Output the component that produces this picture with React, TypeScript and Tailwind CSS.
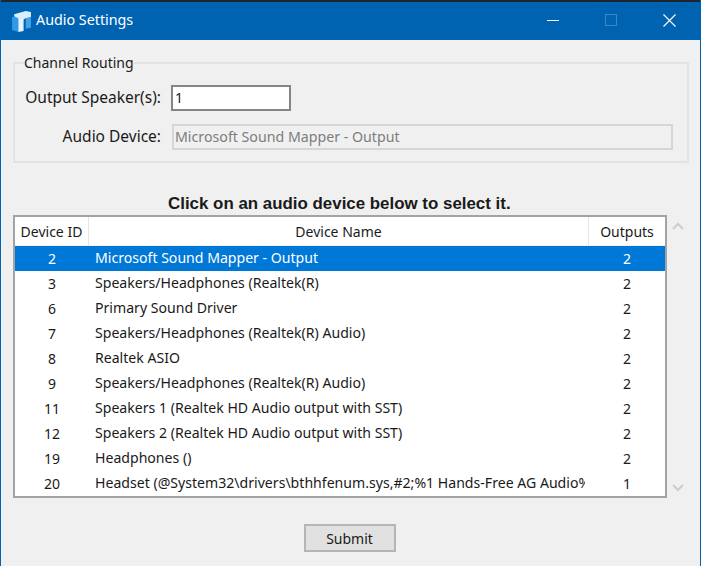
const rows = [
  { id: "2", name: "Microsoft Sound Mapper - Output", outputs: "2" },
  { id: "3", name: "Speakers/Headphones (Realtek(R)", outputs: "2" },
  { id: "6", name: "Primary Sound Driver", outputs: "2" },
  { id: "7", name: "Speakers/Headphones (Realtek(R) Audio)", outputs: "2" },
  { id: "8", name: "Realtek ASIO", outputs: "2" },
  { id: "9", name: "Speakers/Headphones (Realtek(R) Audio)", outputs: "2" },
  { id: "11", name: "Speakers 1 (Realtek HD Audio output with SST)", outputs: "2" },
  { id: "12", name: "Speakers 2 (Realtek HD Audio output with SST)", outputs: "2" },
  { id: "19", name: "Headphones ()", outputs: "2" },
  { id: "20", name: "Headset (@System32\\drivers\\bthhfenum.sys,#2;%1 Hands-Free AG Audio%0", outputs: "1" },
];

function AppIcon() {
  return (
    <svg width="21" height="21" viewBox="0 0 20 20">
      <path d="M1 6 L7 4 L7 20 L1 18 Z" fill="#2f9be6" />
      <path d="M7 4 L12 3 L12 19 L7 20 Z" fill="#e8f4fc" />
      <path d="M3 3 L14 0 L19 1 L19 6 L14 7 L12 8 L7 7 L3 5 Z" fill="#d8eefb" />
      <path d="M14 7 L19 6 L19 16 L14 17 Z" fill="#3fa3e8" />
    </svg>
  );
}

function App() {
  return (
    <div className="w-[701px] h-[566px] bg-[#f0f0f0] flex flex-col overflow-hidden border-x border-[#0063b1] text-[#1a1a1a] font-['Noto_Sans','Open_Sans',sans-serif] text-[14px]">
      <div className="h-[2px] bg-[#1c2530] -mx-px shrink-0"></div>
      <div className="h-[38px] bg-[#0063b1] flex items-center pl-[10px] text-white shrink-0">
        <AppIcon />
        <span className="ml-[4px] text-[14.3px] pb-[2px]">Audio Settings</span>
        <div className="ml-auto flex items-center pb-[2px]">
          <div className="w-[12px] h-px bg-white mr-[46px]"></div>
          <div className="w-[12px] h-[12px] border border-[#3d87c9] mr-[46px]"></div>
          <svg width="13" height="13" viewBox="0 0 13 13" className="mr-[24px]">
            <path d="M0.5 0.5 L12.5 12.5 M12.5 0.5 L0.5 12.5" stroke="#fff" strokeWidth="1.1" />
          </svg>
        </div>
      </div>

      <fieldset className="mt-[13px] ml-[12px] w-[676px] h-[110px] border-2 border-[#e3e3e3] pl-[9px] shrink-0">
        <legend className="px-0 text-[14px] leading-[20px]">Channel Routing</legend>
        <div className="flex items-center mt-[12px]">
          <label className="w-[137px] text-right text-[15.5px]">Output Speaker(s):</label>
          <div className="ml-[10px] w-[120px] h-[26px] bg-white border-2 border-[#858585] pl-[2px] leading-[22px]">1</div>
        </div>
        <div className="flex items-center mt-[13px]">
          <label className="w-[137px] text-right text-[15.5px]">Audio Device:</label>
          <div className="ml-[11px] w-[501px] h-[26px] bg-[#f0f0f0] border-2 border-[#d6d6d6] pl-px leading-[22px] text-[14.2px] text-[#7d7d7d]">
            Microsoft Sound Mapper - Output
          </div>
        </div>
      </fieldset>

      <div className="mt-[29px] h-[23px] pl-[167px] font-['Liberation_Sans',sans-serif] font-bold text-[16.9px] leading-[23px] shrink-0">
        Click on an audio device below to select it.
      </div>

      <div className="ml-[12px] flex shrink-0">
        <div className="w-[654px] h-[283px] bg-white border-2 border-[#a3a3a3]">
          <div className="flex h-[29px] items-center border-b border-[#f0f0f0]">
            <div className="w-[74px] h-full flex items-center justify-center border-r border-[#e5e5e5]">Device ID</div>
            <div className="w-[500px] h-full flex items-center justify-center border-r border-[#e5e5e5]">Device Name</div>
            <div className="w-[76px] text-center">Outputs</div>
          </div>
          {rows.map((row, i) => (
            <div key={row.id} className={`flex h-[25px] items-center pb-px ${i === 0 ? "bg-[#0078d7] text-white" : ""}`}>
              <div className="w-[74px] text-center">{row.id}</div>
              <div className="w-[496px] pl-[6px] whitespace-nowrap overflow-hidden text-[14.1px]">{row.name}</div>
              <div className="w-[4px]"></div>
              <div className="w-[76px] text-center">{row.outputs}</div>
            </div>
          ))}
        </div>
        <div className="w-[22px] h-[283px] flex flex-col items-center justify-between pt-[7px] pb-[6px]">
          <svg width="12" height="8" viewBox="0 0 12 8"><path d="M1 7 L6 2 L11 7" fill="none" stroke="#cdcdcd" strokeWidth="2" /></svg>
          <svg width="12" height="8" viewBox="0 0 12 8"><path d="M1 1 L6 6 L11 1" fill="none" stroke="#cdcdcd" strokeWidth="2" /></svg>
        </div>
      </div>

      <div className="mt-[26px] flex justify-center pr-[2px] shrink-0">
        <button className="w-[92px] h-[28px] bg-[#e1e1e1] border-2 border-[#b5b5b5] text-[14px] leading-none pt-[2px]">Submit</button>
      </div>
    </div>
  );
}

export default App;
